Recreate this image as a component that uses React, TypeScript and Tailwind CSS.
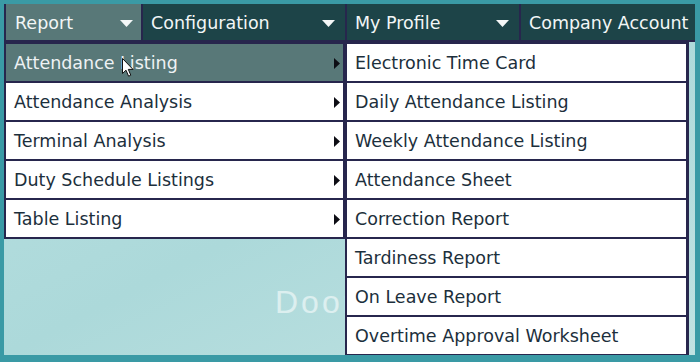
const left = [
  { label: 'Attendance Listing', active: true },
  { label: 'Attendance Analysis' },
  { label: 'Terminal Analysis' },
  { label: 'Duty Schedule Listings' },
  { label: 'Table Listing' },
];

const right = [
  'Electronic Time Card',
  'Daily Attendance Listing',
  'Weekly Attendance Listing',
  'Attendance Sheet',
  'Correction Report',
  'Tardiness Report',
  'On Leave Report',
  'Overtime Approval Worksheet',
];

function Caret() {
  return (
    <svg width="13" height="7" viewBox="0 0 13 7" className="shrink-0">
      <path d="M0 0H13L6.5 7Z" fill="#f4f7f7" />
    </svg>
  );
}

function Arrow() {
  return (
    <svg width="6" height="11" viewBox="0 0 6 11" className="shrink-0">
      <path d="M0 0L6 5.5L0 11Z" fill="#0d0d14" />
    </svg>
  );
}

function Cursor() {
  return (
    <svg width="12" height="19" viewBox="0 0 12 19" className="absolute left-[118px] top-[54px]">
      <path d="M0.5 0.5V15.5L4 12.2L6.6 18.2L8.8 17.2L6.3 11.4H11L0.5 0.5Z" fill="#fff" stroke="#111" strokeWidth="1" strokeLinejoin="round" />
    </svg>
  );
}

export default function App() {
  return (
    <div className="w-[700px] h-[362px] bg-[#3a9aa5] pt-[4px] pl-[4px] pr-[5px] pb-[7px] font-['DejaVu_Sans',sans-serif]">
      <div className="relative h-full bg-gradient-to-br from-[#b9e0e1] via-[#acd9da] to-[#c0e2e2] overflow-hidden">
        <div className="absolute left-[271px] top-[274px] text-[32px] tracking-[3px] text-white/55 font-['Liberation_Sans',sans-serif]">
          Door
        </div>

        <nav className="relative flex h-[38px] border-b-2 border-[#27264d] text-[17.5px] text-[#f2f6f6]">
          <div className="w-[139px] flex items-center justify-between pt-[3px] pl-[9px] pr-[8px] bg-[#587878] border-l-2 border-r-2 border-[#27264d]">
            Report <Caret />
          </div>
          <div className="w-[204px] flex items-center justify-between pt-[3px] pl-[8px] pr-[10px] bg-[#1d4448] border-r-2 border-[#27264d]">
            Configuration <Caret />
          </div>
          <div className="w-[174px] flex items-center justify-between pt-[3px] pl-[8px] pr-[10px] bg-[#1d4448] border-r-2 border-[#27264d]">
            My Profile <Caret />
          </div>
          <div className="flex-1 flex items-center pt-[3px] pl-[8px] bg-[#1d4448] whitespace-nowrap">
            Company Account
          </div>
        </nav>

        <div className="relative flex items-start text-[17.5px] text-[#1c2f3c]">
          <ul className="w-[341px] border-x-2 border-t-2 border-[#27264d]">
            {left.map((item) => (
              <li
                key={item.label}
                className={`h-[39px] flex items-center justify-between pt-[2px] pl-[8px] pr-[3px] border-b-2 border-[#27264d] ${
                  item.active ? 'bg-[#587878] text-[#eef2f4]' : 'bg-white'
                }`}
              >
                {item.label}
                <Arrow />
              </li>
            ))}
          </ul>
          <ul className="w-[344px] border-l-2 border-r-[3px] border-t-2 border-[#27264d]">
            {right.map((label) => (
              <li key={label} className="h-[39px] flex items-center pt-[2px] pl-[8px] bg-white border-b-2 border-[#27264d]">
                {label}
              </li>
            ))}
          </ul>
        </div>

        <Cursor />
      </div>
    </div>
  );
}
